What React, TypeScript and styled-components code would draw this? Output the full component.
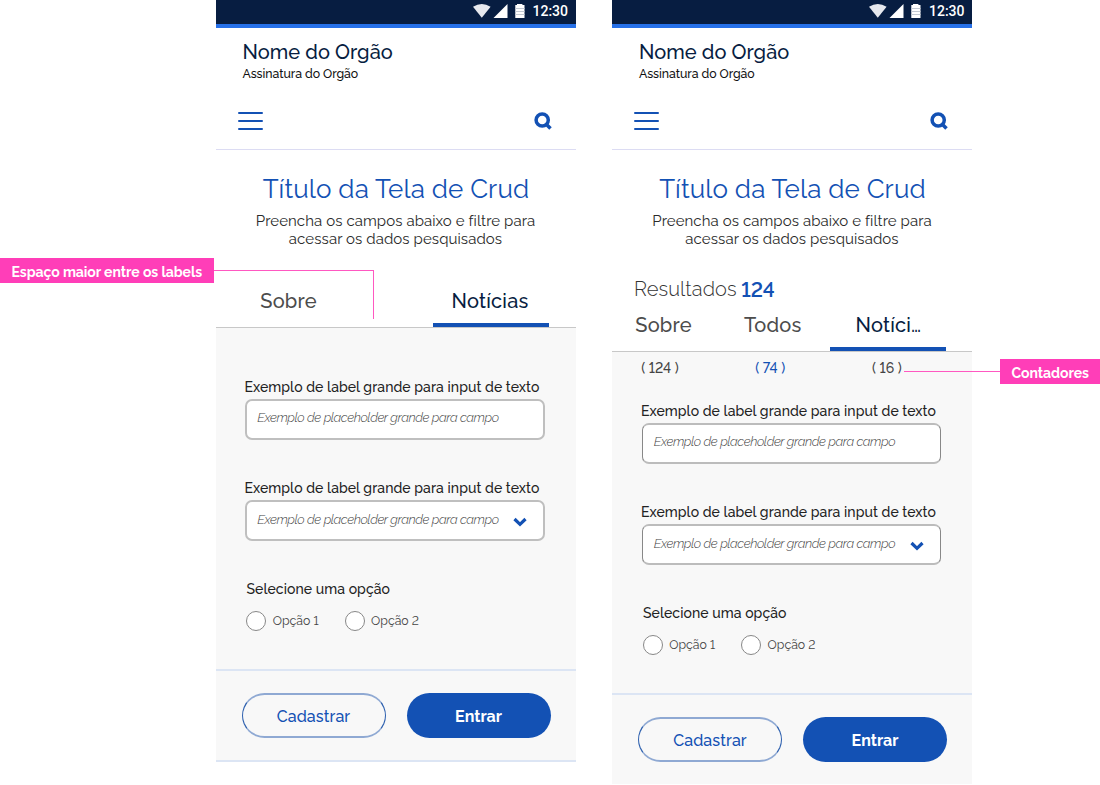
import React from 'react';
import styled, { createGlobalStyle, css } from 'styled-components';

const GlobalStyle = createGlobalStyle`
  *, *::before, *::after { box-sizing: border-box; }
  body {
    margin: 0;
    background: #fff;
    font-family: Raleway, Lato, sans-serif;
    font-variant-numeric: lining-nums;
  }
  h1, h2, p { margin: 0; font-weight: inherit; }
`;

const Board = styled.main`
  position: relative;
  display: flex;
  align-items: flex-start;
  gap: 36.5px;
  width: 1100px;
  height: 785px;
  padding-left: 215.5px;
  overflow: hidden;
`;

const Phone = styled.section`
  flex: none;
  width: 360px;
  background: #fff;
`;

const StatusBar = styled.div`
  display: flex;
  justify-content: flex-end;
  height: 28px;
  padding: 4px 7.5px 0 0;
  background: #071d41;
  border-bottom: 4px solid #2670e8;
`;

const Clock = styled.span`
  margin: -1px 0 0 7.5px;
  color: #fff;
  font: 500 14px/16px Roboto, sans-serif;
`;

const Header = styled.header`
  height: 122px;
  padding: 12px 24px 0 22px;
  border-bottom: 1px solid #dcdcf3;
`;

const OrgName = styled.p`
  padding-left: 5px;
  color: #071d41;
  font-size: 20px;
  font-weight: 500;
  line-height: 24px;
  letter-spacing: 0.05px;
`;

const OrgSignature = styled.p`
  margin: 2px 0 30px;
  padding-left: 5px;
  color: #111;
  font-size: 12.3px;
  font-weight: 500;
  line-height: 16px;
  letter-spacing: -0.06px;
`;

const NavRow = styled.div`
  display: flex;
  justify-content: space-between;
`;

const MenuButton = styled.span`
  display: flex;
  flex-direction: column;
  gap: 6px;
  width: 25px;
  i { height: 2px; background: #1351b4; border-radius: 1px; }
`;

const Title = styled.h1`
  margin-top: 23px;
  padding-left: 1px;
  color: #1351b4;
  font-size: 26px;
  line-height: 32px;
  letter-spacing: 0.13px;
  text-align: center;
`;

const Subtitle = styled.p`
  margin-top: 7px;
  color: #2b2b2b;
  font-size: 15px;
  line-height: 18px;
  letter-spacing: 0.08px;
  text-align: center;
`;

const Results = styled.p`
  display: flex;
  gap: 4.5px;
  height: 24px;
  margin-top: 29px;
  padding-left: 22px;
  color: #333;
  font-size: 20px;
  font-weight: 300;
  line-height: 24px;
  letter-spacing: 0.1px;
`;

const ResultCount = styled.b`
  padding-top: 1px;
  color: #1351b4;
  font-size: 20.5px;
  font-weight: 600;
  letter-spacing: 0;
`;

const columns = css<{ $three?: boolean }>`
  display: grid;
  grid-template-columns: ${p => (p.$three ? '103px 115.4px 116px' : '117px 116px')};
  column-gap: ${p => (p.$three ? '0' : '86px')};
  padding-left: ${p => (p.$three ? '0' : '14.5px')};
  text-align: center;
`;

const Tabs = styled.div<{ $three?: boolean }>`
  ${columns}
  height: 39px;
  margin-top: ${p => (p.$three ? '12px' : '41px')};
  border-bottom: 1px solid #c8c8c8;
`;

const Tab = styled.span<{ $active?: boolean; $nudge?: boolean }>`
  height: 38px;
  padding-right: ${p => (p.$nudge ? '2px' : '0')};
  color: ${p => (p.$active ? '#071d41' : '#4c4c4c')};
  border-bottom: ${p => (p.$active ? '4px solid #1351b4' : '0')};
  font-size: 20px;
  font-weight: 500;
  line-height: 24px;
  letter-spacing: 0.2px;
`;

const Panel = styled.div`
  height: 341px;
  background: #f8f8f8;
`;

const Counters = styled.div`
  ${columns}
  height: 49px;
  padding: 6px 0 0;
`;

const Counter = styled.span<{ $highlight?: boolean; $last?: boolean }>`
  margin-left: ${p => (p.$last ? '-3px' : p.$highlight ? '-5px' : '-7px')};
  color: ${p => (p.$highlight ? '#1351b4' : '#444')};
  font-size: 14px;
  font-weight: 500;
  line-height: 20px;
`;

const Form = styled.div<{ $offset?: boolean }>`
  display: flex;
  flex-direction: column;
  gap: 38px;
  padding: ${p => (p.$offset ? '49px' : '0')} 31px 0 29.5px;
`;

const Field = styled.div`
  display: flex;
  flex-direction: column;
  gap: 2px;
`;

const Label = styled.span<{ $indent?: boolean }>`
  padding-left: ${p => (p.$indent ? '2px' : '0')};
  margin-left: -0.5px;
  color: #222;
  font-size: 14px;
  font-weight: 500;
  line-height: 20px;
  letter-spacing: 0.07px;
  white-space: nowrap;
`;

const Input = styled.div<{ $low?: boolean; $thin?: boolean }>`
  display: flex;
  justify-content: space-between;
  height: 41px;
  padding: ${p => (p.$low ? '8px' : '7px')} 16px 0 ${p => (p.$thin ? '11.3px' : '10.3px')};
  background: #fff;
  border-style: solid;
  border-width: ${p => (p.$thin ? '2px 1px' : '2px')};
  border-color: ${p => (p.$thin ? '#bcbcbc #888' : '#bfbfbf')};
  border-radius: 7px;
`;

const Placeholder = styled.span`
  color: #444;
  font-size: 13px;
  font-style: italic;
  font-weight: 300;
  line-height: 20px;
  letter-spacing: -0.43px;
  white-space: nowrap;
`;

const RadioRow = styled.div`
  display: flex;
  gap: 26px;
  margin-top: 10px;
  padding-left: 1.3px;
`;

const Radio = styled.span`
  display: flex;
  gap: 6.5px;
  height: 20px;
  color: #444;
  font-size: 12.3px;
  font-weight: 400;
  line-height: 20px;
  &::before {
    content: '';
    width: 20px;
    height: 20px;
    background: #fff;
    border: 1px solid #888;
    border-radius: 50%;
  }
`;

const Actions = styled.div<{ $open?: boolean }>`
  display: flex;
  gap: 21px;
  padding: 22px 25px 22px 26px;
  background: #f8f8f8;
  border: solid #dce5f4;
  border-width: ${p => (p.$open ? '2px 0 0' : '2px 0')};
`;

const Button = styled.span<{ $primary?: boolean }>`
  flex: none;
  width: 144px;
  height: 45px;
  border: solid;
  border-width: ${p => (p.$primary ? '0' : '2px 1px')};
  border-color: #8fa9d3 #2c5fae;
  border-radius: 23px;
  background: ${p => (p.$primary ? '#1351b4' : 'transparent')};
  color: ${p => (p.$primary ? '#fff' : '#1351b4')};
  padding-top: ${p => (p.$primary ? '14px' : '12px')};
  font-size: 16px;
  font-weight: ${p => (p.$primary ? 700 : 500)};
  line-height: 20px;
  letter-spacing: ${p => (p.$primary ? '0' : '0.1px')};
  text-align: center;
`;

const Callout = styled.div<{ $right?: boolean }>`
  position: absolute;
  top: ${p => (p.$right ? '359px' : '258px')};
  left: ${p => (p.$right ? '1000px' : '0')};
  width: ${p => (p.$right ? '100px' : '214px')};
  height: 25px;
  padding: 4px 0 0 11.5px;
  background: #ff3eb8;
  color: #fff;
  font-size: 14px;
  font-weight: 700;
  line-height: 20px;
  letter-spacing: -0.07px;
  white-space: nowrap;
`;

const Connector = styled.div<{ $right?: boolean }>`
  position: absolute;
  top: ${p => (p.$right ? '371px' : '270px')};
  left: ${p => (p.$right ? '904px' : '214px')};
  width: ${p => (p.$right ? '96px' : '160px')};
  height: 1px;
  background: #ff58c1;
`;

const ConnectorDrop = styled.div`
  position: absolute;
  top: 270px;
  left: 373px;
  width: 1px;
  height: 49px;
  background: #ff58c1;
`;

const StatusIcons = () => (
  <svg width="52" height="14" viewBox="0 0 52 14">
    <path d="M0 2.8Q8.8-2.8 17.6 2.8L8.8 13.8Z" fill="#e6e8ee" />
    <path d="M20.5 14L34.5 0V14Z" fill="#fff" />
    <path d="M44 0h5.400v1H51.500V14H42.300V1H44Z" fill="#fff" />
    <path d="M42.300 4.500h9.200M42.300 7.500h9.200M42.300 10.500h9.200" stroke="#c3c9d3" />
  </svg>
);

const SearchIcon = () => (
  <svg width="18" height="18" viewBox="0 0 18 18" fill="none" stroke="#1351b4">
    <circle cx="8.200" cy="8" r="6.100" strokeWidth="3.500" />
    <path d="M12 12L16.500 16.500" strokeWidth="3.500" />
  </svg>
);

const Chevron = () => (
  <svg width="14" height="10" viewBox="0 0 14 10" fill="none">
    <path d="M1.500 2L7 7.300L12.500 2" stroke="#1351b4" strokeWidth="3.200" />
  </svg>
);

const ChevronSlot = styled.span`
  display: flex;
  padding-top: 7px;
`;

function Screen({ detailed }: { detailed?: boolean }) {
  return (
    <Phone>
      <StatusBar>
        <StatusIcons />
        <Clock>12:30</Clock>
      </StatusBar>
      <Header>
        <OrgName>Nome do Orgão</OrgName>
        <OrgSignature>Assinatura do Orgão</OrgSignature>
        <NavRow>
          <MenuButton><i /><i /><i /></MenuButton>
          <SearchIcon />
        </NavRow>
      </Header>
      <Title>Título da Tela de Crud</Title>
      <Subtitle>
        Preencha os campos abaixo e filtre para
        <br />
        acessar os dados pesquisados
      </Subtitle>
      {detailed && <Results>Resultados <ResultCount>124</ResultCount></Results>}
      <Tabs $three={detailed}>
        <Tab>Sobre</Tab>
        {detailed && <Tab>Todos</Tab>}
        <Tab $active $nudge={!detailed}>{detailed ? 'Notíci…' : 'Notícias'}</Tab>
      </Tabs>
      <Panel>
        {detailed && (
          <Counters $three>
            <Counter>( 124 )</Counter>
            <Counter $highlight>( 74 )</Counter>
            <Counter $last>( 16 )</Counter>
          </Counters>
        )}
        <Form $offset={!detailed}>
          <Field>
            <Label>Exemplo de label grande para input de texto</Label>
            <Input $thin={detailed}>
              <Placeholder>Exemplo de placeholder grande para campo</Placeholder>
            </Input>
          </Field>
          <Field>
            <Label>Exemplo de label grande para input de texto</Label>
            <Input $thin={detailed} $low>
              <Placeholder>Exemplo de placeholder grande para campo</Placeholder>
              <ChevronSlot><Chevron /></ChevronSlot>
            </Input>
          </Field>
          <Field>
            <Label $indent>Selecione uma opção</Label>
            <RadioRow>
              <Radio>Opção 1</Radio>
              <Radio>Opção 2</Radio>
            </RadioRow>
          </Field>
        </Form>
      </Panel>
      <Actions $open={detailed}>
        <Button>Cadastrar</Button>
        <Button $primary>Entrar</Button>
      </Actions>
    </Phone>
  );
}

export default function App() {
  return (
    <>
      <GlobalStyle />
      <Board>
        <Screen />
        <Screen detailed />
        <Connector />
        <ConnectorDrop />
        <Callout>Espaço maior entre os labels</Callout>
        <Connector $right />
        <Callout $right>Contadores</Callout>
      </Board>
    </>
  );
}
